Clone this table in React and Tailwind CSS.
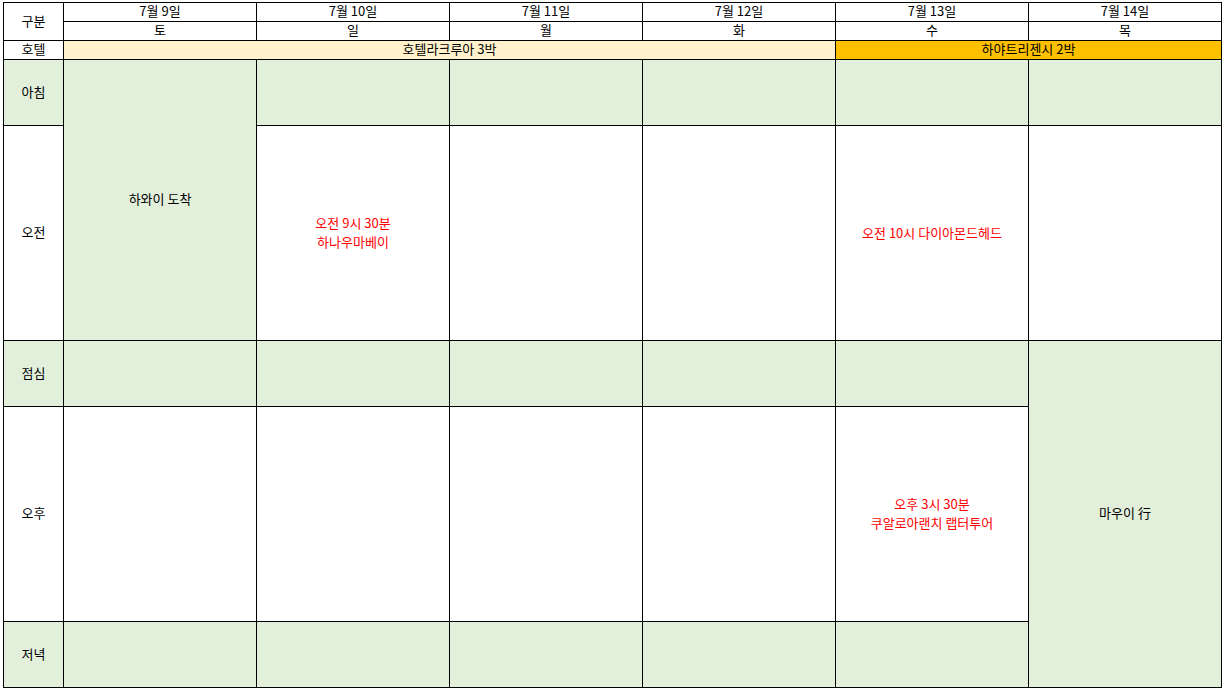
import React from "react";

const days = [
  { date: "7월 9일", dow: "토" },
  { date: "7월 10일", dow: "일" },
  { date: "7월 11일", dow: "월" },
  { date: "7월 12일", dow: "화" },
  { date: "7월 13일", dow: "수" },
  { date: "7월 14일", dow: "목" },
];

const cell = "border border-black text-center align-middle p-0 pb-[2px]";
const green = "bg-[#e2efda]";
const slim = "leading-[16px]";

const Red = ({ lines }) => (
  <div className="text-[#ff0000] leading-[19px]">
    {lines.map((l) => (
      <div key={l}>{l}</div>
    ))}
  </div>
);

const App = () => {
  return (
    <div
      className="w-[1225px] h-[690px] bg-white pt-[2px] pl-[3px] text-[13px] text-black"
      style={{ fontFamily: '"Noto Sans CJK KR", "Noto Sans", sans-serif' }}
    >
      <table className="border-collapse table-fixed w-[1219px]">
        <colgroup>
          <col className="w-[60px]" />
          {days.map((d) => (
            <col key={d.date} className="w-[193px]" />
          ))}
        </colgroup>
        <tbody>
          <tr className="h-[19px]">
            <td rowSpan={2} className={cell}>
              구분
            </td>
            {days.map((d) => (
              <td key={d.date} className={`${cell} ${slim}`}>
                {d.date}
              </td>
            ))}
          </tr>
          <tr className="h-[19px]">
            {days.map((d) => (
              <td key={d.dow} className={`${cell} ${slim}`}>
                {d.dow}
              </td>
            ))}
          </tr>
          <tr className="h-[19px]">
            <td className={`${cell} ${slim}`}>호텔</td>
            <td colSpan={4} className={`${cell} ${slim} bg-[#fff2cc]`}>
              호텔라크루아 3박
            </td>
            <td colSpan={2} className={`${cell} ${slim} bg-[#ffc000]`}>
              하야트리젠시 2박
            </td>
          </tr>
          <tr className="h-[66px]">
            <td className={`${cell} ${green}`}>아침</td>
            <td rowSpan={2} className={`${cell} ${green}`}>
              하와이 도착
            </td>
            <td className={`${cell} ${green}`}></td>
            <td className={`${cell} ${green}`}></td>
            <td className={`${cell} ${green}`}></td>
            <td className={`${cell} ${green}`}></td>
            <td className={`${cell} ${green}`}></td>
          </tr>
          <tr className="h-[215px]">
            <td className={cell}>오전</td>
            <td className={cell}>
              <Red lines={["오전 9시 30분", "하나우마베이"]} />
            </td>
            <td className={cell}></td>
            <td className={cell}></td>
            <td className={cell}>
              <Red lines={["오전 10시 다이아몬드헤드"]} />
            </td>
            <td className={cell}></td>
          </tr>
          <tr className="h-[66px]">
            <td className={`${cell} ${green}`}>점심</td>
            <td className={`${cell} ${green}`}></td>
            <td className={`${cell} ${green}`}></td>
            <td className={`${cell} ${green}`}></td>
            <td className={`${cell} ${green}`}></td>
            <td className={`${cell} ${green}`}></td>
            <td rowSpan={3} className={`${cell} ${green}`}>
              마우이 行
            </td>
          </tr>
          <tr className="h-[215px]">
            <td className={cell}>오후</td>
            <td className={cell}></td>
            <td className={cell}></td>
            <td className={cell}></td>
            <td className={cell}></td>
            <td className={cell}>
              <Red lines={["오후 3시 30분", "쿠알로아랜치 랩터투어"]} />
            </td>
          </tr>
          <tr className="h-[66px]">
            <td className={`${cell} ${green}`}>저녁</td>
            <td className={`${cell} ${green}`}></td>
            <td className={`${cell} ${green}`}></td>
            <td className={`${cell} ${green}`}></td>
            <td className={`${cell} ${green}`}></td>
            <td className={`${cell} ${green}`}></td>
          </tr>
        </tbody>
      </table>
    </div>
  );
};

export default App;
